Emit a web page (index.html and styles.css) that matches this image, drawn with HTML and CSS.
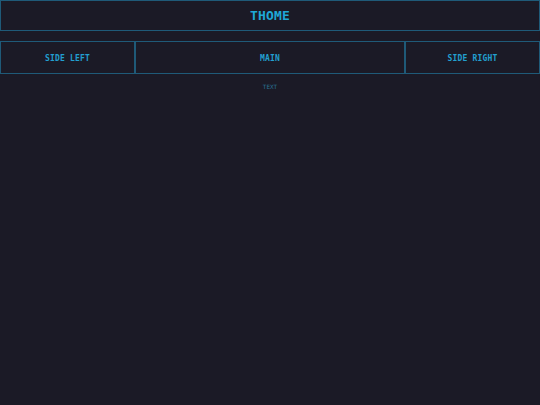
FILE: index.html
```html
<!DOCTYPE html>
<html>
<head>
<meta charset="utf-8">
<link rel="stylesheet" href="styles.css">
</head>
<body>
<header class="top">THOME</header>
<div class="row">
  <div class="cell side">SIDE LEFT</div>
  <div class="cell main">MAIN</div>
  <div class="cell side">SIDE RIGHT</div>
</div>
<p class="note">TEXT</p>
</body>
</html>
```
FILE: styles.css
```css
html, body {
  margin: 0;
  padding: 0;
  background: #1b1a26;
  height: 100%;
}
body {
  font-family: "DejaVu Sans Mono", "Liberation Mono", monospace;
  color: #1fa8d8;
}
.top {
  box-sizing: border-box;
  height: 31px;
  border: 1px solid #1f5a78;
  display: flex;
  align-items: center;
  justify-content: center;
  font-size: 13px;
  font-weight: bold;
  letter-spacing: 0.2px;
}
.row {
  margin-top: 10px;
  display: grid;
  grid-template-columns: 135px 1fr 135px;
  height: 33px;
}
.cell {
  box-sizing: border-box;
  border: 1px solid #1f5a78;
  padding-top: 2px;
  display: flex;
  align-items: center;
  justify-content: center;
  font-size: 8px;
  font-weight: bold;
  letter-spacing: 0.2px;
  color: #229fcf;
}
.note {
  margin: 9px 0 0;
  text-align: center;
  font-size: 6px;
  color: #2a7396;
}
```
